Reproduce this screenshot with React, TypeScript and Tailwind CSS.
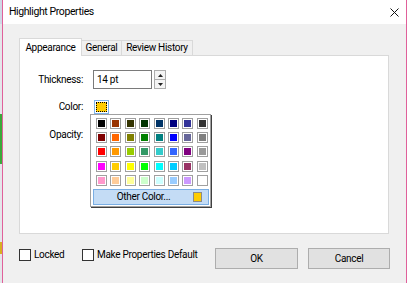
import React from "react";

const PALETTE: string[][] = [
  ["#000000", "#993300", "#333300", "#003300", "#003366", "#000080", "#333399", "#333333"],
  ["#800000", "#ff6600", "#808000", "#008000", "#008080", "#0000ff", "#666699", "#808080"],
  ["#ff0000", "#ff9900", "#99cc00", "#339966", "#33cccc", "#3366ff", "#800080", "#999999"],
  ["#ff00ff", "#ffcc00", "#ffff00", "#00ff00", "#00ffff", "#00ccff", "#993366", "#c0c0c0"],
  ["#ff99cc", "#ffcc99", "#ffff99", "#ccffcc", "#ccffff", "#99ccff", "#cc99ff", "#ffffff"],
];

const font = { fontFamily: 'Roboto, "Noto Sans", sans-serif' };

function Checkbox({ label }: { label: string }) {
  return (
    <label className="flex items-center">
      <span className="h-[12px] w-[12px] border border-[#333333] bg-white" />
      <span className="ml-[3px] text-[10px] leading-none text-black">{label}</span>
    </label>
  );
}

function ColorPopup() {
  return (
    <div className="absolute left-[70px] top-[58px] z-20 flex w-[121px] flex-col border border-[#a0a0a0] bg-white pl-[5px] pt-[3px] shadow-[1px_1px_0_#404040]">
      <div className="grid grid-cols-[repeat(8,11px)] gap-x-[3.4px] gap-y-[3.2px]">
        {PALETTE.flat().map((c, i) => (
          <div key={i} className="h-[11px] w-[11px] border border-[#a0a0a0] p-px">
            <div className="h-full w-full" style={{ backgroundColor: c }} />
          </div>
        ))}
      </div>
      <div className="mb-[1px] mt-[3px] ml-[-3px] flex h-[16px] w-[116px] items-center border border-[#7aaee3] bg-[#c4dcf5] pr-[6px]">
        <span className="flex-1 text-center text-[10px] leading-none text-black">Other Color...</span>
        <span className="h-[10px] w-[9px] border border-[#8a8a8a] bg-[#ffcc00]" />
      </div>
    </div>
  );
}

export default function App() {
  return (
    <div className="flex h-[283px] w-[408px] overflow-hidden bg-white tracking-[-0.3px]" style={font}>
      {/* desktop peeking out on the left */}
      <div className="flex w-[2px] flex-col bg-[#e4e6ea]">
        <div className="h-[24px] bg-[#cfd8e6]" />
        <div className="h-[90px]" />
        <div className="h-[50px] bg-[#3aa83a]" />
        <div className="h-[78px]" />
        <div className="h-[12px] bg-[#d8b020]" />
      </div>

      <div className="flex w-[405px] flex-col border-x border-[#e0609a] bg-[#f0f0f0]">
        {/* title bar */}
        <div className="flex h-[24px] items-center justify-between bg-white pl-[6px] pr-[6px]">
          <span className="text-[10.5px] leading-none tracking-[-0.4px] text-black">Highlight Properties</span>
          <svg width="9" height="9" viewBox="0 0 9 9" className="mr-[1px]">
            <path d="M0.5 0.5L8.5 8.5M8.5 0.5L0.5 8.5" stroke="#111" strokeWidth="1" />
          </svg>
        </div>

        <div className="flex flex-1 flex-col px-[16px] pt-[14px]">
          {/* tabs */}
          <div className="flex h-[17px] items-end text-[10px] leading-none text-black">
            <div className="relative z-10 -mb-px flex h-[18px] w-[63px] items-center justify-center border border-b-0 border-[#d9d9d9] bg-white">
              Appearance
            </div>
            <div className="flex h-[15px] w-[40px] items-center justify-center border-r border-t border-[#d9d9d9] bg-[#f0f0f0]">
              General
            </div>
            <div className="flex h-[15px] w-[71px] items-center justify-center border-r border-t border-[#d9d9d9] bg-[#f0f0f0]">
              Review History
            </div>
          </div>

          {/* panel */}
          <div className="relative h-[179px] w-[370px] border border-[#d9d9d9] bg-white pt-[14px] text-[10px] leading-none text-black">
            <div className="flex items-center">
              <span className="w-[63px] text-right">Thickness:</span>
              <div className="ml-[10px] flex h-[19px] w-[59px] items-center border border-[#7a7a7a] pl-[3px]">14 pt</div>
              <div className="ml-[2px] flex h-[19px] w-[12px] flex-col border border-[#adadad] bg-[#f4f4f4]">
                <div className="flex flex-1 items-center justify-center border-b border-[#adadad]">
                  <svg width="5" height="3" viewBox="0 0 5 3"><path d="M2.5 0L5 3H0Z" fill="#222" /></svg>
                </div>
                <div className="flex flex-1 items-center justify-center">
                  <svg width="5" height="3" viewBox="0 0 5 3"><path d="M0 0H5L2.5 3Z" fill="#222" /></svg>
                </div>
              </div>
            </div>

            <div className="mt-[11px] flex h-[14px] items-center">
              <span className="w-[63px] text-right">Color:</span>
              <div className="ml-[11px] h-[14px] w-[15px] border border-[#7eb4ea] p-px">
                <div className="h-full w-full border border-dotted border-black bg-[#ffcc00]" />
              </div>
            </div>

            <div className="mt-[14px] flex h-[14px] items-center">
              <span className="w-[63px] text-right">Opacity:</span>
            </div>

            <ColorPopup />
          </div>

          {/* footer */}
          <div className="mt-[14px] flex h-[21px] items-start">
            <div className="mt-[1px] w-[63px]">
              <Checkbox label="Locked" />
            </div>
            <div className="mt-[1px]">
              <Checkbox label="Make Properties Default" />
            </div>
            <button className="ml-auto h-[21px] w-[83px] border border-[#adadad] bg-[#e1e1e1] text-[10px] text-black">
              OK
            </button>
            <button className="ml-[10px] h-[21px] w-[82px] border border-[#adadad] bg-[#e1e1e1] text-[10px] text-black">
              Cancel
            </button>
          </div>
        </div>
      </div>
    </div>
  );
}
